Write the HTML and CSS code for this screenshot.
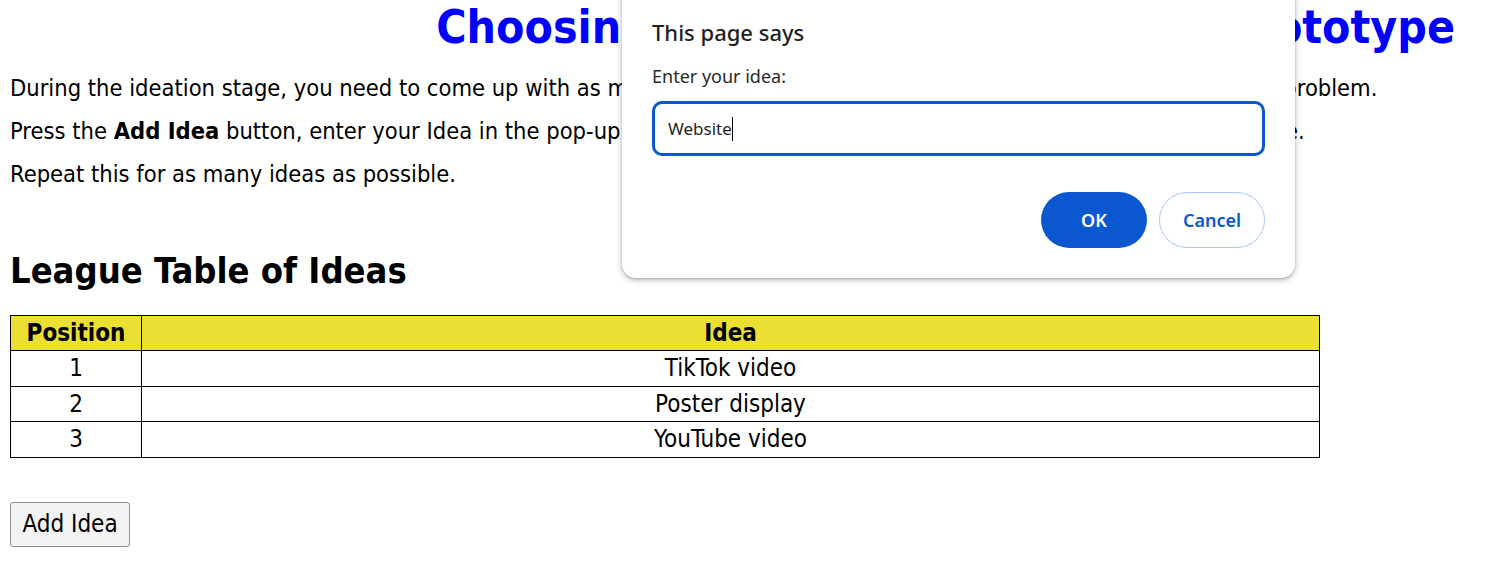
FILE: index.html
```html
<!DOCTYPE html>
<html lang="en">
<head>
<meta charset="utf-8">
<title>Choosing an Idea to Prototype</title>
<link rel="stylesheet" href="styles.css">
</head>
<body>
<h1 class="title">Choosing the Best Idea to Make a Prototype</h1>
<p class="intro">During the ideation stage, you need to come up with as many ideas as you possibly can that might help us to solve the problem.</p>
<p class="intro">Press the <b>Add Idea</b> button, enter your Idea in the pop-up box that appears, and it will then be added to the League Table.</p>
<p class="intro">Repeat this for as many ideas as possible.</p>
<h2 class="subtitle">League Table of Ideas</h2>
<table class="league">
  <thead>
    <tr><th class="pos">Position</th><th>Idea</th></tr>
  </thead>
  <tbody>
    <tr><td>1</td><td>TikTok video</td></tr>
    <tr><td>2</td><td>Poster display</td></tr>
    <tr><td>3</td><td>YouTube video</td></tr>
  </tbody>
</table>
<button class="add-btn" type="button">Add Idea</button>

<div class="dialog">
  <div class="dialog-title">This page says</div>
  <div class="dialog-msg">Enter your idea:</div>
  <div class="dialog-input"><span class="typed">Website</span><span class="caret"></span></div>
  <div class="dialog-actions">
    <button class="btn-ok" type="button">OK</button>
    <button class="btn-cancel" type="button">Cancel</button>
  </div>
</div>
</body>
</html>
```
FILE: styles.css
```css
html, body {
  margin: 0;
  padding: 0;
  background: #ffffff;
}
body {
  padding: 0 10px;
  font-family: "DejaVu Sans Condensed", "DejaVu Sans", sans-serif;
  font-size: 23.5px;
  color: #000;
  position: relative;
}
.title {
  margin: 0;
  padding-right: 44px;
  text-align: right;
  font-size: 46px;
  line-height: 54px;
  color: #0000ff;
  font-weight: bold;
  white-space: nowrap;
  word-spacing: -1.5px;
}
.intro {
  margin: 7px 0 0;
  line-height: 36px;
  white-space: nowrap;
}
.title + .intro {
  margin-top: 16px;
}
.subtitle {
  margin: 57px 0 0;
  font-size: 36px;
  line-height: 44px;
}
.league {
  margin-top: 22px;
  border-collapse: collapse;
  width: 1310px;
}
.league th, .league td {
  border: 1px solid #000;
  text-align: center;
  height: 34.5px;
  padding: 0;
  font-size: 24px;
}
.league th {
  height: 34px;
  background: #ebdf33;
  font-weight: bold;
}
.league th.pos {
  width: 130px;
}
.add-btn {
  margin-top: 44px;
  font-family: inherit;
  font-size: 24px;
  width: 120px;
  height: 45px;
  padding: 0;
  background: #f3f3f3;
  border: 1px solid #8f8f8f;
  border-radius: 3px;
  color: #000;
}
.dialog {
  position: absolute;
  left: 622px;
  top: -20px;
  width: 673px;
  height: 298px;
  box-sizing: border-box;
  background: #fff;
  border-radius: 14px;
  box-shadow: 0 2px 6px rgba(0,0,0,0.28), 0 1px 2px rgba(0,0,0,0.15);
  padding: 37px 30px 0 30px;
  font-family: "Noto Sans", "Open Sans", sans-serif;
  color: #1f1f1f;
}
.dialog-title {
  font-size: 22px;
  font-weight: 500;
  line-height: 30px;
}
.dialog-msg {
  margin-top: 17px;
  font-size: 18px;
  line-height: 24px;
  color: #2a2a2a;
}
.dialog-input {
  margin-top: 13px;
  height: 55px;
  box-sizing: border-box;
  border: 3px solid #0b57d0;
  border-radius: 10px;
  display: flex;
  align-items: center;
  padding-left: 13px;
  font-size: 17px;
}
.caret {
  display: inline-block;
  width: 1px;
  height: 24px;
  background: #000;
}
.dialog-actions {
  margin-top: 36px;
  display: flex;
  justify-content: flex-end;
  gap: 12px;
}
.btn-ok, .btn-cancel {
  font-family: inherit;
  font-size: 18px;
  font-weight: 600;
  height: 56px;
  width: 106px;
  border-radius: 28px;
}
.btn-ok {
  background: #0b57d0;
  color: #fff;
  border: none;
}
.btn-cancel {
  background: #fff;
  color: #0b57d0;
  border: 1.5px solid #a8c7fa;
}
```
